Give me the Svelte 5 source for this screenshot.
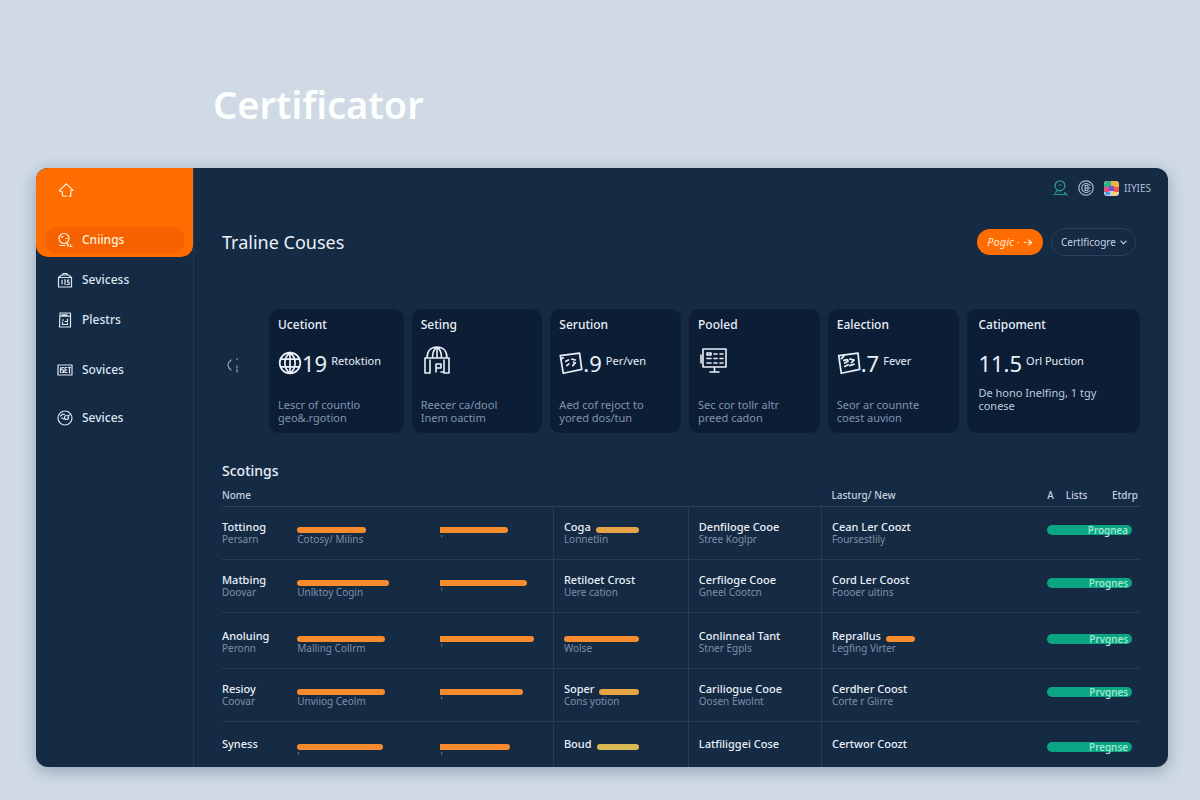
<script lang="ts">
    // stroke paths of the small icons, all drawn on a 16 x 16 grid
    const icons: Record<string, string> = {
        home: "M6 14.2 4.4 13.6V10L1.2 8.6 8.4 1.8 15 8.4h-2.2v5.8h-1.6M7 14.2h1.4",
        search: "M7 1.5a5 5 0 1 0 0 10 5 5 0 1 0 0-10M4.5 5.5 6 4.5M9 6.5h1M3 13.5h5M11 12v2.5M13.5 12.5v2H15M9.5 11l1 1",
        bag: "M1.5 5.5h13v9.5h-13zM1.5 5.5 4.5 3h7l3 2.5M6 3V1.5h4V3M5 8v4M8 7.5v5M12 8h-1.5v2H12v2.5h-2",
        doc: "M3 1h10.5v14H2.5zM3 4.2h10M5 2.8h5M6 7.5v1M10.5 7v2.5H8M5.5 10v2.5h5V11",
        card: "M1 3h14v10H1zM3.5 5.5v5M6.5 5.5H5v2.5h1.5v2.5H5M10 5.5H8v5h2M8 8h2M12.5 5v6M11.5 5.5h2",
        gauge: "M8 1a7 7 0 1 0 0 14A7 7 0 1 0 8 1M9.5 5.5a2 2 0 1 0 0 4 2 2 0 1 0 0-4M3.5 6 6 4l1.5.5M4.5 8l2.5 1M12.5 5l-1.5 1",
        person: "M8 .8a4.9 4.9 0 1 0 0 9.8 4.9 4.9 0 1 0 0-9.8M7 5h2M8 10.5V12M5 10.5l-1.5 2.5M2 14.5h11M12.5 12.5l2.5 2.5",
        coin: "M8 .8a7.2 7.2 0 1 0 0 14.4A7.2 7.2 0 1 0 8 .8M12 5.5A4.5 4.5 0 1 0 12 10.5M9.5 5.5H7.2v5h2.3M7.2 8h5M10 6.5v3",
        chevron: "M3.5 5.5 8 10.5l4.5-5",
        arrow: "M1 8h3M8 8h5M8 3.5 14 8l-6 4.5"
    };

    // the larger icons in the cards, on a 28 x 28 grid
    const cardIcons: Record<string, string> = {
        globe: "M14 2a12 12 0 1 0 0 24 12 12 0 1 0 0-24M14 2v24M3 9.5h22M3 18.5h22M14 2C6 8 6 20 14 26M14 2c8 6 8 18 0 24",
        dome: "M2 12h24v15h-5V14M2 12v15h5V14M4 12C4 5 8 1 14 1s10 4 10 11M14 1v11M9.5 12c0-5 1.5-9 4.5-11M18.5 12c0-5-1.5-9-4.5-11M13 26v-8h5v4h-4M21 18v8h-3",
        photo: "M1.5 5.5 24 2.5l2.5 19L5 26zM8 12l3-1.5M15 9.5l4 1M9 17l2.5-2M16 17l3-3-2-1M3 9l2-1",
        face: "M2 5.5 24.5 2.5l2 19L5 26zM8 11l4-1 1 2-4 2M15 9.5l5 1-3 3M9 18l4-2M15 17l5-1.5M5 9l3-3",
        screen: "M3 3h23v18H3zM10 26h9M14.5 21v5M7 7h4v2H7zM14 8h3M20 8h3M7 12.5h4M14 12.5h3M20 12.5h3M7 17h4M14 17h3M20 17h3M1 9v8"
    };

    const mainLinks = [
        { icon: "bag", label: "Sevicess" },
        { icon: "doc", label: "Plestrs" }
    ];

    const moreLinks = [
        { icon: "card", label: "Sovices" },
        { icon: "gauge", label: "Sevices" }
    ];

    const cards = [
        { title: "Ucetiont", icon: "globe", value: "19", unit: "Retoktion", text: ["Lescr of countlo", "geo&.rgotion"] },
        { title: "Seting", icon: "dome", value: "", unit: "", text: ["Reecer ca/dool", "Inem oactim"] },
        { title: "Serution", icon: "photo", value: ".9", unit: "Per/ven", text: ["Aed cof rejoct to", "yored dos/tun"] },
        { title: "Pooled", icon: "screen", value: "", unit: "", text: ["Sec cor tollr altr", "preed cadon"] },
        { title: "Ealection", icon: "face", value: ".7", unit: "Fever", text: ["Seor ar counnte", "coest auvion"] },
        { title: "Catipoment", icon: "", value: "11.5", unit: "Orl Puction", text: ["De hono Inelfing, 1 tgy", "conese"] }
    ];

    // first and second are bar lengths in percent of their column
    const rows = [
        {
            name: "Tottinog", role: "Persarn", first: 48, firstNote: "Cotosy/ Milins", second: 60,
            group: "Coga", groupBar: "amber", groupNote: "Lonnetlin",
            course: "Denfiloge Cooe", courseNote: "Stree Koglpr",
            place: "Cean Ler Coozt", placeBar: false, placeNote: "Foursestlily", status: "Prognea"
        },
        {
            name: "Matbing", role: "Doovar", first: 64, firstNote: "Unlktoy Cogin", second: 77,
            group: "Retiloet Crost", groupBar: "", groupNote: "Uere cation",
            course: "Cerfiloge Cooe", courseNote: "Gneel Cootcn",
            place: "Cord Ler Coost", placeBar: false, placeNote: "Foooer ultins", status: "Prognes"
        },
        {
            name: "Anoluing", role: "Peronn", first: 61, firstNote: "Malling Collrm", second: 83,
            group: "", groupBar: "orange", groupNote: "Wolse",
            course: "Conlinneal Tant", courseNote: "Stner Egpls",
            place: "Reprallus", placeBar: true, placeNote: "Legfing Virter", status: "Prvgnes"
        },
        {
            name: "Resioy", role: "Coovar", first: 61, firstNote: "Unviiog Ceolm", second: 73,
            group: "Soper", groupBar: "amber", groupNote: "Cons yotion",
            course: "Cariliogue Cooe", courseNote: "Oosen Ewolnt",
            place: "Cerdher Coost", placeBar: false, placeNote: "Corte r Glirre", status: "Prvgnes"
        },
        {
            name: "Syness", role: "", first: 60, firstNote: "'", second: 62,
            group: "Boud", groupBar: "yellow", groupNote: "",
            course: "Latfiliggei Cose", courseNote: "",
            place: "Certwor Coozt", placeBar: false, placeNote: "", status: "Pregnse"
        }
    ];
</script>

{#snippet icon(name: string)}
    <svg class="icon" viewBox="0 0 16 16" aria-hidden="true"><path d={icons[name]} /></svg>
{/snippet}

{#snippet navLink(item: { icon: string, label: string })}
    <a class="nav-link" href="#{item.label}">
        {@render icon(item.icon)}
        <span>{item.label}</span>
    </a>
{/snippet}

<div class="page">
    <h1>Certificator</h1>

    <div class="window">
        <aside>
            <div class="brand">
                <a class="home" href="#home" aria-label="Home">{@render icon("home")}</a>
                <a class="nav-link active" href="#current">
                    {@render icon("search")}
                    <span>Cniings</span>
                </a>
            </div>
            <nav>
                {#each mainLinks as item}
                    {@render navLink(item)}
                {/each}
            </nav>
            <nav class="more">
                {#each moreLinks as item}
                    {@render navLink(item)}
                {/each}
            </nav>
        </aside>

        <main>
            <div class="topbar">
                <button class="plain green" aria-label="People">{@render icon("person")}</button>
                <button class="plain" aria-label="Credits">{@render icon("coin")}</button>
                <button class="plain account">
                    <svg class="avatar" viewBox="0 0 15 15" aria-hidden="true">
                        <rect width="15" height="15" rx="3" fill="#d9c9e2" />
                        <path d="M3 0h4v6H0V3z" fill="#2fb58a" />
                        <path d="M7 0h5l3 3v3H7z" fill="#f2b23c" />
                        <path d="M0 6h5v5H0z" fill="#e64f7a" />
                        <path d="M5 5h5v5H5z" fill="#7a4fd0" />
                        <path d="M10 6h5v5h-5z" fill="#ef5a4c" />
                        <path d="M1 11h5v3H2z" fill="#35a9e0" />
                        <path d="M8 11h5v3H8z" fill="#f4d65a" />
                    </svg>
                    <span>IIYIES</span>
                </button>
            </div>

            <header>
                <h2>Traline Couses</h2>
                <button class="primary">
                    <span>Pogic ·</span>
                    {@render icon("arrow")}
                </button>
                <div class="picker">
                    <select aria-label="Certificate">
                        <option>Certlficogre</option>
                    </select>
                    {@render icon("chevron")}
                </div>
            </header>

            <section class="cards">
                <button class="plain previous" aria-label="Previous">
                    <svg viewBox="0 0 14 16" aria-hidden="true">
                        <path d="M5 3C1 6 1 10 5 13M11 1.5v1M11 9v1.5M11 12v3" />
                    </svg>
                </button>
                {#each cards as card}
                    <article class:wide={!card.icon}>
                        <h3>{card.title}</h3>
                        <div class="figure">
                            {#if card.icon}
                                <svg class={card.value ? "card-icon" : "card-icon large"} viewBox="0 0 28 28" aria-hidden="true">
                                    <path d={cardIcons[card.icon]} />
                                </svg>
                            {/if}
                            {#if card.value}
                                <strong>{card.value}</strong>
                                <span>{card.unit}</span>
                            {/if}
                        </div>
                        <p>
                            {#each card.text as line}
                                <span>{line}</span>
                            {/each}
                        </p>
                    </article>
                {/each}
            </section>

            <h4>Scotings</h4>
            <table>
                <colgroup>
                    <col class="c-name" />
                    <col class="c-first" />
                    <col class="c-second" />
                    <col class="c-group" />
                    <col class="c-course" />
                    <col class="c-place" />
                    <col class="c-status" />
                </colgroup>
                <thead>
                    <tr>
                        <th colspan="5">Nome</th>
                        <th class="inset">Lasturg/ New</th>
                        <th><div class="heads"><span>A</span><span>Lists</span><span>Etdrp</span></div></th>
                    </tr>
                </thead>
                <tbody>
                    {#each rows as row}
                        <tr>
                            <td>
                                <div class="line">{row.name}</div>
                                <div class="note">{row.role}</div>
                            </td>
                            <td>
                                <div class="line"><i class="bar orange" style={`width: ${row.first}%;`}></i></div>
                                <div class="note">{row.firstNote}</div>
                            </td>
                            <td>
                                <div class="line"><i class="bar orange flat" style={`width: ${row.second}%;`}></i></div>
                                <div class="note">'</div>
                            </td>
                            <td class="inset ruled">
                                <div class="line fit">
                                    {row.group}
                                    {#if row.groupBar}<i class="bar {row.groupBar}"></i>{/if}
                                </div>
                                <div class="note">{row.groupNote}</div>
                            </td>
                            <td class="inset ruled">
                                <div class="line">{row.course}</div>
                                <div class="note">{row.courseNote}</div>
                            </td>
                            <td class="inset ruled">
                                <div class="line fit long">
                                    {row.place}
                                    {#if row.placeBar}<i class="bar orange"></i>{/if}
                                </div>
                                <div class="note">{row.placeNote}</div>
                            </td>
                            <td>
                                <div class="status">{row.status}</div>
                            </td>
                        </tr>
                    {/each}
                </tbody>
            </table>
        </main>
    </div>
</div>

<style>
    :global(body)
    {
        background: #cfdae5;
    }

    .page
    {
        box-sizing: border-box;
        padding: 76px 32px 33px 36px;

        color: #e9f0f8;
        font-family: "Noto Sans", sans-serif;
        font-size: 12px;
        line-height: 16px;
    }

    h1, h2, h3, h4, p
    {
        margin: 0;
    }

    h1
    {
        padding-left: 177px;
        margin-bottom: 36px;

        color: #fdfefe;
        font-size: 38px;
        font-weight: 600;
        line-height: 56px;
    }

    .window
    {
        display: grid;
        grid-template-columns: 158px minmax(0, 1fr);

        overflow: hidden;
        border-radius: 12px;
        background: #152a43;
        box-shadow: 0 4px 16px rgba(60, 80, 105, 0.4);
    }

    svg
    {
        display: block;
        flex: none;
    }

    .icon, .card-icon, .previous svg
    {
        fill: none;
        stroke: currentColor;
        stroke-width: 1.2;
        stroke-linecap: round;
        stroke-linejoin: round;
    }

    .icon
    {
        width: 16px;
        height: 16px;
    }

    /* sidebar */
    aside
    {
        border-right: 1px solid #223b57;
    }

    .brand
    {
        display: flex;
        flex-direction: column;
        justify-content: space-between;

        box-sizing: border-box;
        height: 89px;
        padding: 14px 8px 4px 9px;

        border-radius: 12px 0 12px 12px;
        background: #ff6c00;
    }

    .home
    {
        align-self: flex-start;
        margin-left: 13px;
        color: #fff1dc;
    }

    .nav-link
    {
        display: flex;
        align-items: center;
        gap: 9px;

        height: 40px;
        padding-left: 21px;

        color: #dbe6f2;
        font-weight: 500;
        text-decoration: none;
    }

    .nav-link.active
    {
        height: 26px;
        padding-left: 12px;
        border-radius: 13px;

        background: #f66200;
        color: #fff1dc;
    }

    nav
    {
        padding-top: 3px;
    }

    .more
    {
        padding-top: 6px;
    }

    .more .nav-link
    {
        height: 48px;
    }

    /* main column */
    main
    {
        padding: 8px 28px 0;
    }

    button, select
    {
        font: inherit;
        color: inherit;
    }

    .plain
    {
        padding: 0;
        border: none;
        background: none;
    }

    .topbar
    {
        display: flex;
        justify-content: flex-end;
        align-items: center;
        gap: 10px;

        height: 24px;
        margin-right: -11px;

        color: #a9bdd3;
        font-size: 10px;
    }

    .topbar .green
    {
        color: #2b9c8c;
    }

    .account
    {
        display: flex;
        align-items: center;
        gap: 5px;
    }

    .avatar
    {
        width: 15px;
        height: 15px;
    }

    header
    {
        display: flex;
        align-items: center;
        gap: 8px;

        padding: 28px 4px 0 0;
    }

    h2
    {
        flex: 1;

        font-size: 18px;
        font-weight: 400;
        line-height: 28px;
    }

    .primary
    {
        display: flex;
        justify-content: center;
        align-items: center;
        gap: 4px;

        width: 66px;
        height: 26px;
        padding: 0;

        border: none;
        border-radius: 13px;
        background: #ff6c00;
        color: #ffe9d0;
        font-size: 11px;
        font-style: italic;
    }

    .primary .icon, .picker .icon
    {
        width: 9px;
        height: 9px;
        stroke-width: 2;
    }

    .picker
    {
        display: grid;
        grid-template-columns: minmax(0, 1fr);
        align-items: center;

        width: 85px;
        color: #c3d2e2;
        font-size: 10px;
    }

    .picker select
    {
        grid-area: 1 / 1;

        box-sizing: border-box;
        width: 100%;
        height: 28px;
        padding: 0 16px 0 9px;

        appearance: none;
        border: 1px solid #2a415c;
        border-radius: 14px;
        background: transparent;
    }

    .picker .icon
    {
        grid-area: 1 / 1;
        justify-self: end;
        margin-right: 8px;
        pointer-events: none;
    }

    /* cards */
    .cards
    {
        display: grid;
        grid-template-columns: 39px 135fr 131fr 131fr 131fr 132fr 173fr;
        gap: 8px;

        margin-top: 53px;
    }

    .previous
    {
        display: flex;
        align-items: center;
        padding: 0 0 12px 4px;

        color: #93a7bf;
    }

    .previous svg
    {
        width: 14px;
        height: 16px;
    }

    article
    {
        display: flex;
        flex-direction: column;

        box-sizing: border-box;
        min-width: 0;
        height: 124px;
        padding: 8px 0 8px 9px;

        border-radius: 10px;
        background: #0c1d36;
    }

    h3
    {
        font-size: 12px;
        font-weight: 500;
        line-height: 16px;
    }

    .figure
    {
        display: flex;
        align-items: center;

        height: 32px;
        margin: 14px 0 19px;
        white-space: nowrap;
    }

    .card-icon
    {
        width: 24px;
        height: 24px;
        stroke-width: 2;
    }

    .card-icon.large
    {
        width: 28px;
        height: 28px;
        margin: 0 0 6px 2px;
        stroke-width: 1.6;
    }

    .figure strong
    {
        font-size: 22px;
        font-weight: 400;
        line-height: 32px;
    }

    .figure span
    {
        padding: 0 0 4px 4px;
        font-size: 11px;
    }

    article p
    {
        color: #8194ae;
        font-size: 11px;
        line-height: 13px;
    }

    article p span
    {
        display: block;
        white-space: nowrap;
    }

    .wide
    {
        padding-left: 11px;
    }

    .wide .figure
    {
        margin-bottom: 7px;
    }

    .wide p
    {
        color: #bccbdc;
    }

    /* table */
    h4
    {
        margin-top: 28px;

        font-size: 14px;
        font-weight: 500;
        line-height: 20px;
    }

    table
    {
        width: 100%;
        table-layout: fixed;
        border-collapse: collapse;
    }

    .c-name { width: 8.2%; }
    .c-first { width: 15.6%; }
    .c-second { width: 12.3%; }
    .c-group { width: 14.7%; }
    .c-course { width: 14.5%; }
    .c-place { width: 24.6%; }
    .c-status { width: 10.1%; }

    th
    {
        height: 23px;
        padding: 2px 0 0;

        border-bottom: 1px solid #2a415a;
        color: #c3d1e0;
        font-size: 10px;
        font-weight: 500;
        text-align: left;
    }

    td
    {
        height: 39px;
        padding: 13px 0 0;

        border-bottom: 1px solid #263d57;
        vertical-align: top;
        white-space: nowrap;
    }

    tbody tr:nth-child(3) td
    {
        padding-top: 16px;
    }

    tbody tr:last-child td
    {
        height: 30px;
        padding-top: 15px;
        border-bottom: none;
    }

    .ruled
    {
        border-left: 1px solid #263d57;
    }

    th.inset, td.inset
    {
        padding-left: 10px;
    }

    .heads
    {
        display: flex;
        gap: 12px;
        padding-right: 2px;
    }

    .heads span:last-child
    {
        margin-left: auto;
    }

    .line
    {
        display: flex;
        align-items: flex-end;
        gap: 5px;

        height: 13px;

        font-size: 11px;
        font-weight: 500;
        line-height: 13px;
    }

    .fit
    {
        width: 75px;
    }

    .fit.long
    {
        width: 83px;
    }

    .note
    {
        height: 13px;

        color: #7e90a8;
        font-size: 10px;
        line-height: 13px;
    }

    .bar
    {
        height: 6px;
        border-radius: 3px;
    }

    .fit .bar
    {
        flex: 1;
    }

    .flat
    {
        border-radius: 0 3px 3px 0;
    }

    .orange
    {
        background: #f88b2e;
    }

    .amber
    {
        background: #e6a446;
    }

    .yellow
    {
        background: #d8b852;
    }

    .status
    {
        height: 10px;
        margin: 5px 8px 0 0;
        padding-right: 4px;

        border-radius: 5px;
        background: #0ba584;
        color: #a9ecd2;
        font-size: 10px;
        font-weight: 500;
        line-height: 10px;
        text-align: right;
    }
</style>
